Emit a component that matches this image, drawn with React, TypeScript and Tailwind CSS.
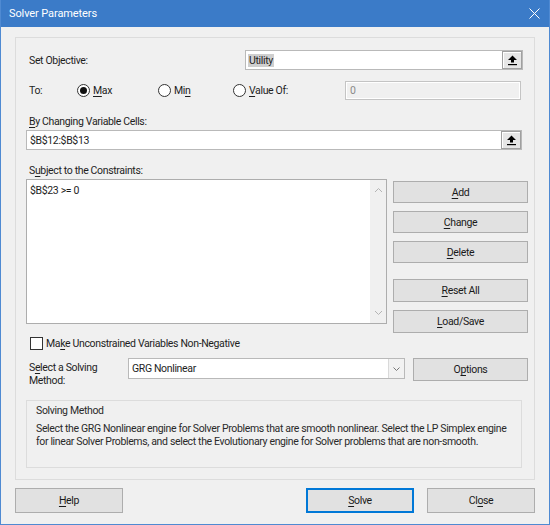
import React from "react";

const U = ({ children }: { children: React.ReactNode }) => (
  <span className="underline underline-offset-[2px] decoration-[1px]">{children}</span>
);

const RefIcon = () => (
  <svg width="11" height="11" viewBox="0 0 11 11">
    <polygon points="5.5,0.5 10,5 7,5 7,7.5 4,7.5 4,5 1,5" fill="#000" />
    <rect x="1" y="9" width="9" height="1.2" fill="#000" />
  </svg>
);

const RefButton = () => (
  <div className="w-[20px] self-stretch border border-[#a0a0a0] bg-[#e6e6e6] flex items-center justify-center shadow-[inset_1px_1px_0_#fff]">
    <RefIcon />
  </div>
);

const Radio = ({ checked }: { checked?: boolean }) => (
  <div className="w-[13px] h-[13px] rounded-full border border-[#333] bg-white flex items-center justify-center">
    {checked && <div className="w-[7px] h-[7px] rounded-full bg-[#111]" />}
  </div>
);

const Btn = ({
  children,
  className = "",
}: {
  children: React.ReactNode;
  className?: string;
}) => (
  <div
    className={
      "border border-[#adadad] bg-[#e1e1e1] flex items-center justify-center text-[#1a1a1a] " +
      className
    }
  >
    {children}
  </div>
);

const Chevron = ({ up }: { up?: boolean }) => (
  <svg width="9" height="6" viewBox="0 0 9 6">
    <polyline
      points={up ? "1,5 4.5,1.5 8,5" : "1,1 4.5,4.5 8,1"}
      fill="none"
      stroke="#b4b4b4"
      strokeWidth="1"
    />
  </svg>
);

export default function App() {
  return (
    <div
      className="w-[550px] h-[525px] bg-[#f0f0f0] border-l border-r border-b border-[#4f8ad2] flex flex-col text-[10.5px] leading-[13px] tracking-[-0.35px] text-[#1e1e1e]"
      style={{ fontFamily: 'Roboto, "Noto Sans", sans-serif' }}
    >
      {/* Title bar */}
      <div className="h-[27px] shrink-0 bg-[#3b7bc8] flex items-center justify-between pl-[8px] pr-[9px] text-white text-[11px] tracking-[-0.1px]">
        <span>Solver Parameters</span>
        <svg width="11" height="11" viewBox="0 0 11 11">
          <path d="M0.5 0.5 L10.5 10.5 M10.5 0.5 L0.5 10.5" stroke="#fff" strokeWidth="1" />
        </svg>
      </div>

      <div className="flex-1 flex flex-col px-[14px] pt-[10px]">
        {/* Main panel */}
        <div className="h-[443px] border border-[#dcdcdc] flex flex-col pl-[10px]">
          {/* Set objective */}
          <div className="mt-[12px] h-[20px] flex items-center">
            <span className="ml-[3px] flex-1">
              Set Ob<U>j</U>ective:
            </span>
            <div className="w-[278px] h-[20px] flex border border-[#b9b9b9] bg-white">
              <div className="flex-1 flex items-center pl-[2px]">
                <span className="bg-[#cfcfcf] px-[1px]">Utility</span>
              </div>
              <RefButton />
            </div>
            <div className="w-[11px]" />
          </div>

          {/* To row */}
          <div className="mt-[11px] h-[19px] flex items-center">
            <span className="ml-[3px] w-[48px]">To:</span>
            <div className="flex items-center gap-[3px] w-[81px]">
              <Radio checked />
              <span>
                <U>M</U>ax
              </span>
            </div>
            <div className="flex items-center gap-[3px] w-[75px]">
              <Radio />
              <span>
                Mi<U>n</U>
              </span>
            </div>
            <div className="flex items-center gap-[3px] w-[112px]">
              <Radio />
              <span>
                <U>V</U>alue Of:
              </span>
            </div>
            <div className="w-[176px] h-[19px] border border-[#c4c4c4] bg-white p-[1px]">
              <div className="w-full h-full bg-[#f0f0f0] flex items-center pl-[3px] text-[#8a8a8a]">
                0
              </div>
            </div>
          </div>

          {/* By changing */}
          <div className="mt-[15px] ml-[3px] h-[13px]">
            <U>B</U>y Changing Variable Cells:
          </div>
          <div className="mt-[2px] w-[496px] h-[20px] flex border border-[#b9b9b9] bg-white">
            <div className="flex-1 flex items-center pl-[3px]">$B$12:$B$13</div>
            <RefButton />
          </div>

          {/* Subject to */}
          <div className="mt-[14px] ml-[3px] h-[13px]">
            S<U>u</U>bject to the Constraints:
          </div>
          <div className="mt-[2px] h-[155px] flex items-start">
            <div className="w-[361px] h-[145px] border border-[#adadad] bg-white flex">
              <div className="flex-1 pl-[3px] pt-[4px]">$B$23 &gt;= 0</div>
              <div className="w-[16px] bg-[#f0f0f0] flex flex-col items-center justify-between py-[7px]">
                <Chevron up />
                <Chevron />
              </div>
            </div>
            <div className="ml-[6px] w-[135px] flex flex-col">
              <Btn className="h-[22px] mt-[2px]">
                <span>
                  <U>A</U>dd
                </span>
              </Btn>
              <Btn className="h-[22px] mt-[8px]">
                <span>
                  <U>C</U>hange
                </span>
              </Btn>
              <Btn className="h-[22px] mt-[8px]">
                <span>
                  <U>D</U>elete
                </span>
              </Btn>
              <Btn className="h-[23px] mt-[16px]">
                <span>
                  <U>R</U>eset All
                </span>
              </Btn>
              <Btn className="h-[23px] mt-[8px]">
                <span>
                  <U>L</U>oad/Save
                </span>
              </Btn>
            </div>
          </div>

          {/* Checkbox */}
          <div className="mt-[3px] ml-[4px] h-[13px] flex items-center gap-[3px]">
            <div className="w-[13px] h-[13px] border border-[#333] bg-white" />
            <span>
              Ma<U>k</U>e Unconstrained Variables Non-Negative
            </span>
          </div>

          {/* Solving method */}
          <div className="mt-[8px] h-[23px] flex items-start">
            <div className="ml-[3px] w-[99px] pt-[3px]">
              S<U>e</U>lect a Solving
              <br />
              Method:
            </div>
            <div className="w-[277px] h-[21px] border border-[#b9b9b9] bg-white flex">
              <div className="flex-1 flex items-center pl-[3px]">GRG Nonlinear</div>
              <div className="w-[16px] border-l border-[#d9d9d9] bg-[#f2f2f2] flex items-center justify-center">
                <svg width="7" height="4" viewBox="0 0 7 4">
                  <polyline points="0.5,0.5 3.5,3.5 6.5,0.5" fill="none" stroke="#777" strokeWidth="1" />
                </svg>
              </div>
            </div>
            <Btn className="ml-[8px] w-[115px] h-[23px]">
              <span>
                O<U>p</U>tions
              </span>
            </Btn>
          </div>

          {/* Solving method group */}
          <div className="mt-[19px] w-[496px] h-[68px] border border-[#dcdcdc] pl-[9px] pr-[12px] pt-[3px] text-[#2a2a2a]">
            <div>Solving Method</div>
            <div className="mt-[5px] leading-[13px]">
              Select the GRG Nonlinear engine for Solver Problems that are smooth nonlinear. Select the LP Simplex engine for linear Solver Problems, and select the Evolutionary engine for Solver problems that are non-smooth.
            </div>
          </div>
        </div>

        {/* Bottom buttons */}
        <div className="mt-[8px] flex">
          <Btn className="w-[108px] h-[25px]">
            <span>
              <U>H</U>elp
            </span>
          </Btn>
          <div className="flex-1" />
          <Btn className="w-[108px] h-[25px] !border-[#0078d7] shadow-[inset_0_0_0_1px_#0078d7]">
            <span>
              <U>S</U>olve
            </span>
          </Btn>
          <Btn className="ml-[13px] w-[108px] h-[25px]">
            <span>
              Cl<U>o</U>se
            </span>
          </Btn>
        </div>
      </div>
    </div>
  );
}
